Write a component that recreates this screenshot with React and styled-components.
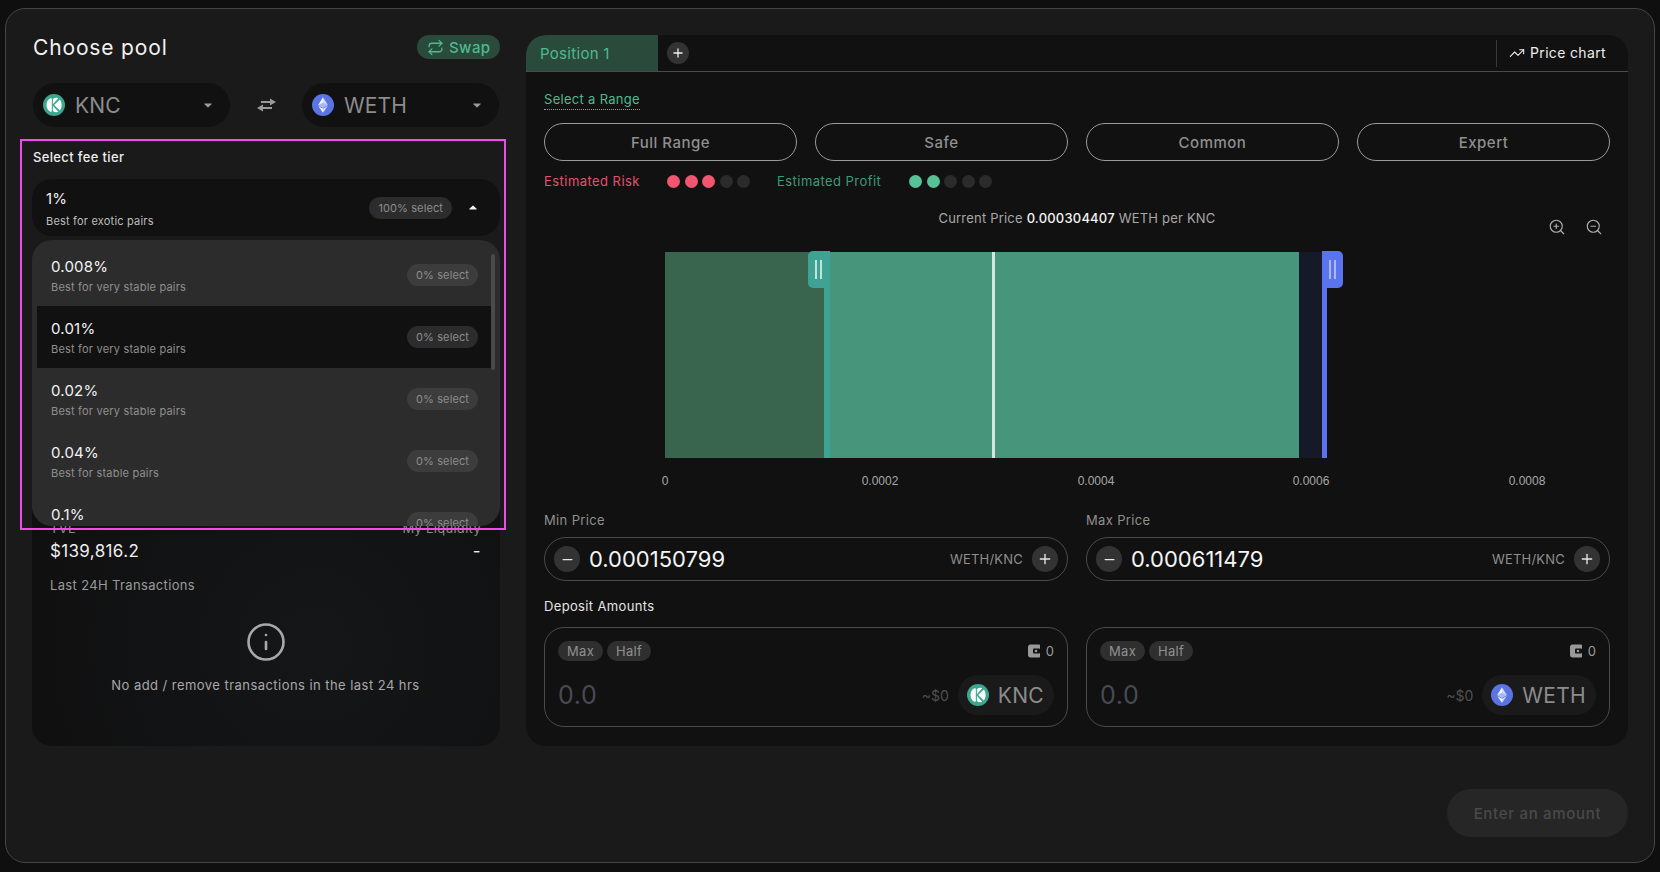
import React from 'react';
import styled, { createGlobalStyle } from 'styled-components';
import { Repeat, TrendingUp, ZoomIn, ZoomOut, Plus, Minus, Info } from 'lucide-react';

const GlobalStyle = createGlobalStyle`
  html, body {
    margin: 0;
    padding: 0;
    background: #0f0f0f;
    font-family: Inter, "Liberation Sans", sans-serif;
  }
  * { box-sizing: border-box; }
`;

const Page = styled.div`
  width: 1660px;
  height: 872px;
  padding: 8px 5px 9px 5px;
  overflow: hidden;
`;

const Frame = styled.div`
  height: 855px;
  background: #1a1a1a;
  border: 1px solid #454545;
  border-radius: 20px;
  padding: 26px 26px 0 26px;
  display: flex;
  flex-direction: column;
`;

const Columns = styled.div`
  display: flex;
  gap: 26px;
  align-items: stretch;
`;

const LeftCol = styled.div`
  position: relative;
  width: 468px;
  height: 711px;
  display: flex;
  flex-direction: column;
`;

const Highlight = styled.div`
  position: absolute;
  left: -12px;
  top: 104px;
  width: 486px;
  height: 391px;
  border: 2px solid #ee4be8;
  z-index: 3;
  pointer-events: none;
`;

const HeadRow = styled.div`
  display: flex;
  justify-content: space-between;
  align-items: center;
  height: 24px;
  margin-bottom: 24px;
`;

const Title = styled.h1`
  margin: 0 0 0 1px;
  font-size: 21px;
  font-weight: 400;
  letter-spacing: 0.85px;
  color: #f2f2f2;
`;

const SwapPill = styled.button`
  display: flex;
  align-items: center;
  gap: 5px;
  height: 24px;
  width: 83px;
  padding: 0 0 0 10px;
  border: 0;
  border-radius: 12px;
  background: #2a4a3c;
  color: #4fb98f;
  font: 500 15px Inter, sans-serif;
  letter-spacing: 0.4px;
`;

const TokenRow = styled.div`
  display: flex;
  align-items: center;
  justify-content: space-between;
  margin: 0 1px 22px 1px;
`;

const TokenSelect = styled.div`
  width: 197px;
  height: 44px;
  padding: 0 18px 0 10px;
  display: flex;
  align-items: center;
  gap: 10px;
  border-radius: 22px;
  background: #111111;
`;

const TokenName = styled.span`
  flex: 1;
  padding-top: 1px;
  font-size: 21px;
  font-weight: 400;
  letter-spacing: 0.1px;
  color: #8c8c8c;
`;

const Flip = styled.div`
  display: flex;
  color: #9a9a9a;
`;

const FeeLabel = styled.div`
  margin-left: 1px;
  font-size: 13px;
  font-weight: 500;
  letter-spacing: 0.35px;
  color: #ededed;
  line-height: 16px;
  margin-bottom: 14px;
`;

const FeeSelect = styled.div`
  position: relative;
  height: 57px;
  margin-bottom: 14px;
  z-index: 2;
`;

const FeeCurrent = styled.div`
  height: 57px;
  padding: 2px 23px 0 14px;
  display: flex;
  align-items: center;
  justify-content: space-between;
  background: #111111;
  border-radius: 20px;
`;

const FeeText = styled.div`
  display: flex;
  flex-direction: column;
  gap: 6px;
`;

const FeeValue = styled.div`
  font-size: 15px;
  font-weight: 400;
  letter-spacing: 0.2px;
  line-height: 18px;
  color: #f2f2f2;
`;

const FeeHint = styled.div`
  font-size: 11px;
  letter-spacing: 0.2px;
  line-height: 14px;
  color: ${({ $bright }) => ($bright ? '#bdbdbd' : '#8f8f8f')};
`;

const Badge = styled.span`
  display: inline-flex;
  align-items: center;
  height: 22px;
  padding: 0 9px;
  border-radius: 11px;
  background: ${({ $light }) => ($light ? '#3c3c3c' : '#2c2c2c')};
  font-size: 11px;
  letter-spacing: 0.1px;
  color: #8c8c8c;
`;

const BadgeGroup = styled.div`
  display: flex;
  align-items: center;
  gap: 17px;
  margin-top: -2px;
`;

const Dropdown = styled.div`
  position: absolute;
  left: 0;
  right: 0;
  top: 61px;
  height: 286px;
  padding-top: 4px;
  background: #2c2c2c;
  border-radius: 20px;
  overflow: hidden;
`;

const DropRow = styled.div`
  height: 62px;
  margin: 0 9px 0 5px;
  padding: 0 13px 0 14px;
  display: flex;
  align-items: center;
  justify-content: space-between;
  background: ${({ $active }) => ($active ? '#111111' : 'transparent')};
`;

const DropText = styled.div`
  padding-top: 2px;
  display: flex;
  flex-direction: column;
  gap: 4px;
`;

const ScrollThumb = styled.div`
  position: absolute;
  right: 5px;
  top: 14px;
  width: 4px;
  height: 116px;
  border-radius: 2px;
  background: #4a4a4a;
`;

const StatsCard = styled.div`
  flex: 1;
  padding: 270px 19px 0 18px;
  border-radius: 20px;
  background: radial-gradient(circle at 60% 80%, #151617, #0f0f10 70%);
  display: flex;
  flex-direction: column;
`;

const StatRow = styled.div`
  display: flex;
  justify-content: space-between;
  font-size: 13px;
  line-height: 16px;
  letter-spacing: 0.3px;
  color: #8c8c8c;
  margin-bottom: 3px;
`;

const StatValues = styled.div`
  display: flex;
  justify-content: space-between;
  font-size: 17px;
  line-height: 24px;
  font-weight: 400;
  letter-spacing: 0.35px;
  color: #eeeeee;
  margin-bottom: 14px;
`;

const SubHead = styled.div`
  font-size: 13px;
  letter-spacing: 0.35px;
  line-height: 16px;
  color: #9a9a9a;
`;

const Empty = styled.div`
  margin-top: 28px;
  display: flex;
  flex-direction: column;
  align-items: center;
  gap: 14px;
  color: #a8a8a8;
  font-size: 13px;
  letter-spacing: 0.45px;
  line-height: 16px;
`;

const RightPanel = styled.div`
  flex: 1;
  height: 711px;
  background: #111111;
  border-radius: 20px;
  display: flex;
  flex-direction: column;
`;

const TabBar = styled.div`
  height: 37px;
  flex: none;
  display: flex;
  align-items: center;
  border-bottom: 1px solid #4a4a4a;
`;

const Tab = styled.div`
  width: 132px;
  height: 36px;
  padding-left: 14px;
  display: flex;
  align-items: center;
  background: #2a4a3c;
  border-top-left-radius: 20px;
  color: #4fb98f;
  font-size: 15px;
  letter-spacing: 0.3px;
`;

const AddTab = styled.div`
  width: 22px;
  height: 22px;
  margin-left: 9px;
  border-radius: 50%;
  background: #333333;
  color: #f0f0f0;
  display: flex;
  align-items: center;
  justify-content: center;
`;

const ChartLink = styled.div`
  margin-left: auto;
  height: 27px;
  width: 132px;
  padding: 0 0 1px 12px;
  display: flex;
  align-items: center;
  gap: 5px;
  border-left: 1px solid #3a3a3a;
  color: #ededed;
  font-size: 14px;
  letter-spacing: 0.35px;
`;

const Body = styled.div`
  padding: 19px 18px 0 18px;
  display: flex;
  flex-direction: column;
`;

const RangeTitle = styled.span`
  align-self: flex-start;
  font-size: 13px;
  letter-spacing: 0.3px;
  line-height: 16px;
  padding-bottom: 2px;
  color: #4fb98f;
  border-bottom: 1px dotted #4fb98f;
`;

const RangeRow = styled.div`
  display: grid;
  grid-template-columns: repeat(4, 1fr);
  gap: 18px;
  margin-top: 13px;
`;

const RangeButton = styled.button`
  height: 38px;
  border: 1px solid #9a9a9a;
  border-radius: 19px;
  background: transparent;
  color: #8f8f8f;
  font: 500 15px Inter, sans-serif;
  letter-spacing: 0.5px;
`;

const EstimateRow = styled.div`
  display: flex;
  align-items: center;
  margin-top: 11px;
  height: 18px;
`;

const EstimateLabel = styled.span`
  width: ${({ $w }) => $w}px;
  font-size: 13px;
  letter-spacing: 0.45px;
  color: ${({ $profit }) => ($profit ? '#3f9a77' : '#e0516d')};
`;

const Dots = styled.div`
  display: flex;
  gap: 4.6px;
  width: ${({ $w }) => $w}px;
`;

const Dot = styled.span`
  width: 13px;
  height: 13px;
  border-radius: 50%;
  background: ${({ $color }) => $color || '#2b2b2b'};
`;

const PriceRow = styled.div`
  display: grid;
  grid-template-columns: 1fr auto 1fr;
  height: 53px;
  padding-top: 12px;
  margin-top: 8px;
  font-size: 13px;
  letter-spacing: 0.2px;
  line-height: 16px;
  color: #a8a8a8;
`;

const PriceLine = styled.span`
  grid-column: 2;
`;

const PriceStrong = styled.b`
  font-weight: 500;
  color: #f2f2f2;
`;

const ZoomTools = styled.div`
  grid-column: 3;
  justify-self: end;
  display: flex;
  gap: 19px;
  padding: 8px 7px 0 0;
  color: #b0b0b0;
`;

const ChartSvg = styled.svg`
  display: block;
  width: 1066px;
  height: 253px;
`;

const FieldGrid = styled.div`
  display: grid;
  grid-template-columns: 1fr 1fr;
  column-gap: 18px;
  margin-top: 8px;
`;

const FieldLabel = styled.div`
  font-size: 13px;
  letter-spacing: 0.35px;
  line-height: 16px;
  color: ${({ $bright }) => ($bright ? '#e4e4e4' : '#8f8f8f')};
  margin-bottom: 9px;
`;

const PriceInput = styled.div`
  height: 44px;
  padding: 0 9px 0 9px;
  display: flex;
  align-items: center;
  border: 1px solid #4a4a4a;
  border-radius: 22px;
`;

const RoundBtn = styled.div`
  width: 26px;
  height: 26px;
  border-radius: 50%;
  background: #333333;
  color: #e8e8e8;
  display: flex;
  align-items: center;
  justify-content: center;
  flex: none;
`;

const PriceValue = styled.div`
  flex: 1;
  margin-left: 9px;
  font-size: 22px;
  color: #f5f5f5;
`;

const PriceUnit = styled.div`
  font-size: 13px;
  letter-spacing: 0.2px;
  color: #8f8f8f;
  margin-right: 9px;
`;

const DepositHead = styled.div`
  margin: 17px 0 4px;
  grid-column: 1 / 3;
`;

const DepositCard = styled.div`
  height: 100px;
  padding: 13px 13px 0 13px;
  border: 1px solid #4a4a4a;
  border-radius: 20px;
  display: flex;
  flex-direction: column;
  gap: 14px;
`;

const CardRow = styled.div`
  display: flex;
  align-items: center;
  justify-content: space-between;
`;

const Chips = styled.div`
  display: flex;
  gap: 4px;
`;

const Chip = styled.span`
  height: 20px;
  padding: 0 9px;
  display: flex;
  align-items: center;
  border-radius: 10px;
  background: #2f2f2f;
  font-size: 13px;
  letter-spacing: 0.3px;
  color: #8f8f8f;
`;

const Balance = styled.div`
  display: flex;
  align-items: center;
  gap: 6px;
  font-size: 13px;
  color: #9a9a9a;
`;

const Amount = styled.div`
  flex: 1;
  font-size: 25px;
  letter-spacing: 0.6px;
  color: #474a55;
`;

const Usd = styled.div`
  font-size: 14px;
  color: #505050;
  margin-right: 9px;
`;

const TokenChip = styled.div`
  height: 40px;
  padding: 0 10px 0 9px;
  display: flex;
  align-items: center;
  gap: 9px;
  border-radius: 20px;
  background: #1a1a1a;
  font-size: 21px;
  letter-spacing: 0.3px;
  color: #8c8c8c;
`;

const Footer = styled.div`
  display: flex;
  justify-content: flex-end;
  margin-top: 43px;
`;

const SubmitBtn = styled.button`
  width: 181px;
  height: 48px;
  border: 0;
  border-radius: 24px;
  background: #262626;
  color: #4a4a4a;
  font: 500 15px Inter, sans-serif;
  letter-spacing: 0.7px;
`;

const KncLogo = ({ size = 22 }) => (
  <svg width={size} height={size} viewBox="0 0 24 24">
    <circle cx="12" cy="12" r="12" fill="#3ba78f" />
    <path d="M8 4.600c1.100-.3 1.600.3 1.600 1.200v12.400c0 .9-.5 1.500-1.600 1.200C5.200 18 3.800 15.200 3.800 12S5.200 6 8 4.600z" fill="#fff" />
    <path d="M10.800 11.200V5.500c1.700-1.300 3.800-1.700 5.800-.9l-5.800 6.600zM10.800 12.800v5.700c1.700 1.300 3.800 1.700 5.800.9l-5.800-6.600zM12.200 12l6.200-6c1.200 1.600 1.900 3.900 1.900 6s-.7 4.400-1.900 6l-6.200-6z" fill="#fff" />
  </svg>
);

const EthLogo = ({ size = 22 }) => (
  <svg width={size} height={size} viewBox="0 0 24 24">
    <circle cx="12" cy="12" r="12" fill="#5b74e4" />
    <path d="M12 3.500 6.800 12 12 15z" fill="#fff" fillOpacity="0.95" />
    <path d="M12 3.500 17.200 12 12 15z" fill="#d5dcfb" />
    <path d="M6.800 13 12 16.100V20.500z" fill="#fff" fillOpacity="0.95" />
    <path d="M17.200 13 12 16.100V20.500z" fill="#d5dcfb" />
    <path d="M12 9.300 6.800 12 12 15 17.200 12z" fill="#aab8f4" />
  </svg>
);

const CaretSvg = styled.svg`
  transform: ${({ $up }) => ($up ? 'rotate(180deg)' : 'none')};
`;

const Caret = ({ up }) => (
  <CaretSvg $up={up} width="8" height="5" viewBox="0 0 10 6">
    <path d="M1 .5h8c.6 0 .9.6.5 1L5.500 5.300a.7.700 0 0 1-1 0L.5 1.500C.1 1.100.4.500 1 .5z" fill={up ? '#f0f0f0' : '#9a9a9a'} />
  </CaretSvg>
);

const FlipIcon = () => (
  <svg width="19" height="14" viewBox="0 0 19 14" fill="currentColor">
    <path d="M4 3h9V.5L19 4l-6 3.500V5H4z" />
    <path d="M15 9H6V6.500L0 10l6 3.500V11h9z" />
  </svg>
);

const WalletIcon = () => (
  <svg width="13" height="14" viewBox="0 0 13 14">
    <path d="M1 3C1 1.500 2 .5 3.500 .5H12c.6 0 1 .4 1 1v11c0 .6-.4 1-1 1H3.500C2 13.500 1 12.500 1 11z" fill="#9a9a9a" />
    <rect x="6" y="4.500" width="7" height="5" rx="1" fill="#111" />
    <circle cx="9" cy="7" r="1.300" fill="#9a9a9a" />
  </svg>
);

// flag grows to the left of the line on the min handle, to the right on the max one
const Handle = ({ x, body, grip, flip }) => (
  <g>
    {flip ? (
      <path d={`M${x + 22} 0V207H${x + 16}V37H${x + 5}a5 5 0 0 1-5-5V5a5 5 0 0 1 5-5z`} fill={body} />
    ) : (
      <path d={`M${x} 0V207H${x + 5}V37H${x + 16}a5 5 0 0 0 5-5V5a5 5 0 0 0-5-5z`} fill={body} />
    )}
    <rect x={x + 7} y="9" width="2" height="19" fill={grip} />
    <rect x={x + 12} y="9" width="2" height="19" fill={grip} />
  </g>
);

const axis = [
  { x: 121, t: '0' },
  { x: 336, t: '0.0002' },
  { x: 552, t: '0.0004' },
  { x: 767, t: '0.0006' },
  { x: 983, t: '0.0008' },
];

const PriceChart = () => (
  <ChartSvg viewBox="0 0 1066 253">
    <rect x="121" y="1" width="160" height="206" fill="#39654f" />
    <rect x="281" y="1" width="474" height="206" fill="#47957a" />
    <rect x="755" y="1" width="23" height="206" fill="#161a28" />
    <rect x="448" y="1" width="3" height="206" fill="#d8e4de" />
    <Handle x={264} body="#3fa393" grip="#c4e2da" flip />
    <Handle x={778} body="#5a74f0" grip="#a9b8f8" />
    {axis.map(a => (
      <text key={a.t} x={a.x} y="234" textAnchor="middle" fill="#a8a8a8" fontSize="12" fontFamily="Liberation Sans, sans-serif">
        {a.t}
      </text>
    ))}
  </ChartSvg>
);

const fees = [
  { v: '0.008%', h: 'Best for very stable pairs' },
  { v: '0.01%', h: 'Best for very stable pairs', active: true },
  { v: '0.02%', h: 'Best for very stable pairs' },
  { v: '0.04%', h: 'Best for stable pairs' },
  { v: '0.1%', h: 'Best for exotic pairs' },
];

const PriceField = ({ label, value }) => (
  <div>
    <FieldLabel>{label}</FieldLabel>
    <PriceInput>
      <RoundBtn><Minus size={15} strokeWidth={2} /></RoundBtn>
      <PriceValue>{value}</PriceValue>
      <PriceUnit>WETH/KNC</PriceUnit>
      <RoundBtn><Plus size={16} strokeWidth={2} /></RoundBtn>
    </PriceInput>
  </div>
);

const Deposit = ({ logo, symbol }) => (
  <DepositCard>
    <CardRow>
      <Chips>
        <Chip>Max</Chip>
        <Chip>Half</Chip>
      </Chips>
      <Balance><WalletIcon /> 0</Balance>
    </CardRow>
    <CardRow>
      <Amount>0.0</Amount>
      <Usd>~$0</Usd>
      <TokenChip>{logo}{symbol}</TokenChip>
    </CardRow>
  </DepositCard>
);

const App = () => (
  <Page>
    <GlobalStyle />
    <Frame>
      <Columns>
        <LeftCol>
          <Highlight />
          <HeadRow>
            <Title>Choose pool</Title>
            <SwapPill><Repeat size={17} strokeWidth={1.8} />Swap</SwapPill>
          </HeadRow>
          <TokenRow>
            <TokenSelect>
              <KncLogo />
              <TokenName>KNC</TokenName>
              <Caret />
            </TokenSelect>
            <Flip><FlipIcon /></Flip>
            <TokenSelect>
              <EthLogo />
              <TokenName>WETH</TokenName>
              <Caret />
            </TokenSelect>
          </TokenRow>
          <FeeLabel>Select fee tier</FeeLabel>
          <FeeSelect>
            <FeeCurrent>
              <FeeText>
                <FeeValue>1%</FeeValue>
                <FeeHint $bright>Best for exotic pairs</FeeHint>
              </FeeText>
              <BadgeGroup>
                <Badge>100% select</Badge>
                <Caret up />
              </BadgeGroup>
            </FeeCurrent>
            <Dropdown>
              {fees.map(f => (
                <DropRow key={f.v} $active={f.active}>
                  <DropText>
                    <FeeValue>{f.v}</FeeValue>
                    <FeeHint>{f.h}</FeeHint>
                  </DropText>
                  <Badge $light={!f.active}>0% select</Badge>
                </DropRow>
              ))}
              <ScrollThumb />
            </Dropdown>
          </FeeSelect>
          <StatsCard>
            <StatRow>
              <span>TVL</span>
              <span>My Liquidity</span>
            </StatRow>
            <StatValues>
              <span>$139,816.2</span>
              <span>-</span>
            </StatValues>
            <SubHead>Last 24H Transactions</SubHead>
            <Empty>
              <Info size={42} strokeWidth={1.5} />
              No add / remove transactions in the last 24 hrs
            </Empty>
          </StatsCard>
        </LeftCol>
        <RightPanel>
          <TabBar>
            <Tab>Position 1</Tab>
            <AddTab><Plus size={14} strokeWidth={2.2} /></AddTab>
            <ChartLink><TrendingUp size={16} strokeWidth={1.6} />Price chart</ChartLink>
          </TabBar>
          <Body>
            <RangeTitle>Select a Range</RangeTitle>
            <RangeRow>
              <RangeButton>Full Range</RangeButton>
              <RangeButton>Safe</RangeButton>
              <RangeButton>Common</RangeButton>
              <RangeButton>Expert</RangeButton>
            </RangeRow>
            <EstimateRow>
              <EstimateLabel $w={123}>Estimated Risk</EstimateLabel>
              <Dots $w={110}>
                {[1, 2, 3, 4, 5].map(i => <Dot key={i} $color={i <= 3 ? '#f0566f' : undefined} />)}
              </Dots>
              <EstimateLabel $w={132} $profit>Estimated Profit</EstimateLabel>
              <Dots $w={110}>
                {[1, 2, 3, 4, 5].map(i => <Dot key={i} $color={i <= 2 ? '#56c295' : undefined} />)}
              </Dots>
            </EstimateRow>
            <PriceRow>
              <PriceLine>
                Current Price <PriceStrong>0.000304407</PriceStrong> WETH per KNC
              </PriceLine>
              <ZoomTools>
                <ZoomIn size={18} strokeWidth={1.5} />
                <ZoomOut size={18} strokeWidth={1.5} />
              </ZoomTools>
            </PriceRow>
            <PriceChart />
            <FieldGrid>
              <PriceField label="Min Price" value="0.000150799" />
              <PriceField label="Max Price" value="0.000611479" />
              <DepositHead><FieldLabel $bright>Deposit Amounts</FieldLabel></DepositHead>
              <Deposit logo={<KncLogo />} symbol="KNC" />
              <Deposit logo={<EthLogo />} symbol="WETH" />
            </FieldGrid>
          </Body>
        </RightPanel>
      </Columns>
      <Footer>
        <SubmitBtn>Enter an amount</SubmitBtn>
      </Footer>
    </Frame>
  </Page>
);

export default App;
